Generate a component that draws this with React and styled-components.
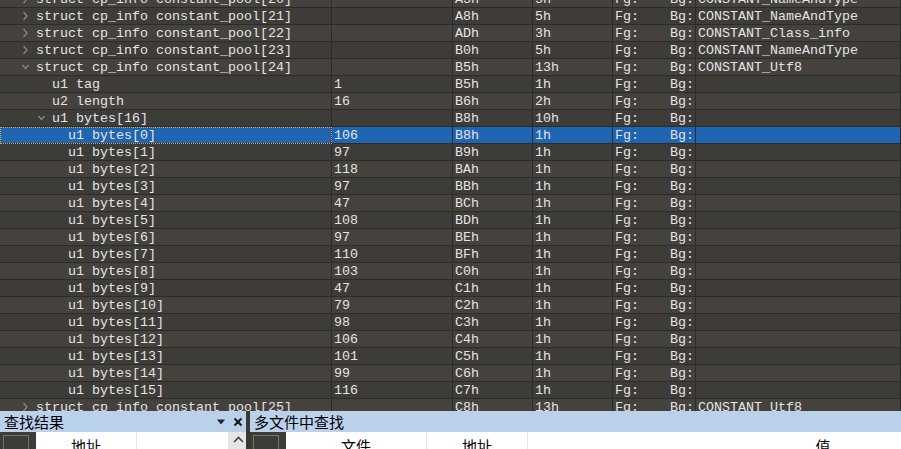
import React from 'react'
import styled, { createGlobalStyle } from 'styled-components'

/***************************************
  DATA
***************************************/

const pool = (n, start, size, comment, open) => ({
  level: 1, name: `struct cp_info constant_pool[${n}]`, value: '', start, size, comment,
  toggle: open ? 'open' : 'closed',
})

const byteValues = [106, 97, 118, 97, 47, 108, 97, 110, 103, 47, 79, 98, 106, 101, 99, 116]

const rows = [
  pool(20, 'A3h', '5h', 'CONSTANT_NameAndType'),
  pool(21, 'A8h', '5h', 'CONSTANT_NameAndType'),
  pool(22, 'ADh', '3h', 'CONSTANT_Class_info'),
  pool(23, 'B0h', '5h', 'CONSTANT_NameAndType'),
  pool(24, 'B5h', '13h', 'CONSTANT_Utf8', true),
  { level: 2, name: 'u1 tag', value: '1', start: 'B5h', size: '1h' },
  { level: 2, name: 'u2 length', value: '16', start: 'B6h', size: '2h' },
  { level: 2, name: 'u1 bytes[16]', value: '', start: 'B8h', size: '10h', toggle: 'open' },
  ...byteValues.map((v, i) => ({
    level: 3,
    name: `u1 bytes[${i}]`,
    value: String(v),
    start: (0xb8 + i).toString(16).toUpperCase() + 'h',
    size: '1h',
    selected: i === 0,
  })),
  pool(25, 'C8h', '13h', 'CONSTANT_Utf8'),
]

/***************************************
  COMPONENTS
***************************************/

const GlobalStyle = createGlobalStyle`
  html, body {
    margin: 0;
    padding: 0;
    background: #3e3c38;
  }
`

const Root = styled.div`
  width: 901px;
  height: 449px;
  display: flex;
  flex-direction: column;
  overflow: hidden;
  background: #3e3c38;
`

const Tree = styled.div`
  height: 411px;
  flex: none;
  overflow: hidden;
`

const TreeBody = styled.div`
  margin-top: -9px;
`

const Row = styled.div`
  display: grid;
  grid-template-columns: 332px 121px 80px 80px 83px 1fr;
  height: 17px;
  background: ${(p) => (p.$selected ? '#1f65b2' : p.$odd ? '#3e3c38' : '#45423e')};
  font-family: "Liberation Mono", "DejaVu Sans Mono", monospace;
  font-size: 13.33px;
  line-height: 17px;
  color: #e4e4e4;
`

const Cell = styled.div`
  border-right: 1px solid #2e2c29;
  border-bottom: 1px solid #2e2c29;
  padding-left: 2px;
  white-space: nowrap;
  overflow: hidden;
`

const NameCell = styled(Cell)`
  display: flex;
  align-items: center;
  padding-left: ${(p) => 20 + 16 * (p.$level - 1)}px;
  ${(p) => p.$focus && `
    outline: 1px dotted #e8a040;
    outline-offset: -1px;
  `}
`

const Toggle = styled.span`
  width: 16px;
  height: 16px;
  flex: none;
  display: flex;
  align-items: center;
  padding-left: 2px;
  box-sizing: border-box;
`

const ColorCell = styled(Cell)`
  display: flex;
  justify-content: space-between;
  padding-right: 1px;
`

const Bottom = styled.div`
  flex: 1;
  display: flex;
  background: #3e3c38;
  font-family: "Noto Sans CJK SC", sans-serif;
`

const Panel = styled.div`
  width: ${(p) => (p.$width ? `${p.$width}px` : 'auto')};
  flex: ${(p) => (p.$width ? 'none' : '1')};
  display: flex;
  flex-direction: column;
  overflow: hidden;
`

const Splitter = styled.div`
  width: 4px;
  flex: none;
  background: #3a3834;
`

const PanelHeader = styled.div`
  height: 21px;
  flex: none;
  background: #bad1eb;
  display: flex;
  align-items: center;
  padding-left: 4px;
  color: #000;
  font-size: 15px;
  line-height: 21px;
`

const Title = styled.span`
  flex: 1;
`

const HeaderTool = styled.span`
  width: 17px;
  display: flex;
  justify-content: center;
  align-items: center;
`

const HeaderRow = styled.div`
  display: flex;
  height: 17px;
  overflow: hidden;
`

const Corner = styled.div`
  width: 36px;
  flex: none;
  background: #3e3c38;
  padding: 3px 0 0 3px;
  box-sizing: border-box;
`

const CornerBox = styled.div`
  width: 26px;
  height: 20px;
  border: 1px solid #77746f;
  box-sizing: border-box;
`

const ColHead = styled.div`
  width: ${(p) => p.$width}px;
  flex: none;
  background: #fff;
  border-right: 1px solid #e4e4e4;
  color: #000;
  font-size: 15px;
  line-height: 17px;
  padding-top: 5px;
  text-align: center;
`

const ScrollUp = styled.div`
  width: 19px;
  flex: none;
  background: #e6e6e6;
  display: flex;
  justify-content: center;
  padding-top: 4px;
`

/***************************************
  ICONS
***************************************/

const Chevron = ({ open }) => (
  <svg width="8" height="10" viewBox="0 0 8 10">
    {open
      ? <path d="M0.5 3 L3.5 6.5 L6.5 3" fill="none" stroke="#8a8884" strokeWidth="1.3" />
      : <path d="M1.5 1 L5 5 L1.5 9" fill="none" stroke="#8a8884" strokeWidth="1.3" />}
  </svg>
)

const Caret = () => (
  <svg width="10" height="6" viewBox="0 0 10 6">
    <path d="M1 0.5 H9 L5 5.5 Z" fill="#222" />
  </svg>
)

const Cross = () => (
  <svg width="10" height="10" viewBox="0 0 10 10">
    <path d="M1.5 1.5 L8.5 8.5 M8.5 1.5 L1.5 8.5" stroke="#111" strokeWidth="2" />
  </svg>
)

const UpArrow = () => (
  <svg width="11" height="7" viewBox="0 0 11 7">
    <path d="M1 6 L5.5 1.5 L10 6" fill="none" stroke="#444" strokeWidth="1.6" />
  </svg>
)

/***************************************
  MAIN
***************************************/

const TreeRow = ({ row, index }) => (
  <Row $odd={index % 2 === 1} $selected={row.selected}>
    <NameCell $level={row.level} $focus={row.selected}>
      <Toggle>{row.toggle && <Chevron open={row.toggle === 'open'} />}</Toggle>
      {row.name}
    </NameCell>
    <Cell>{row.value}</Cell>
    <Cell>{row.start}</Cell>
    <Cell>{row.size}</Cell>
    <ColorCell>
      <span>Fg:</span>
      <span>Bg:</span>
    </ColorCell>
    <Cell>{row.comment || ''}</Cell>
  </Row>
)

const App = () => (
  <Root>
    <GlobalStyle />
    <Tree>
      <TreeBody>
        {rows.map((row, i) => <TreeRow key={i} row={row} index={i} />)}
      </TreeBody>
    </Tree>
    <Bottom>
      <Panel $width={246}>
        <PanelHeader>
          <Title>查找结果</Title>
          <HeaderTool><Caret /></HeaderTool>
          <HeaderTool><Cross /></HeaderTool>
        </PanelHeader>
        <HeaderRow>
          <Corner><CornerBox /></Corner>
          <ColHead $width={100}>地址</ColHead>
          <ColHead $width={91} />
          <ScrollUp><UpArrow /></ScrollUp>
        </HeaderRow>
      </Panel>
      <Splitter />
      <Panel>
        <PanelHeader>
          <Title>多文件中查找</Title>
        </PanelHeader>
        <HeaderRow>
          <Corner><CornerBox /></Corner>
          <ColHead $width={140}>文件</ColHead>
          <ColHead $width={100}>地址</ColHead>
          <ColHead $width={590}>值</ColHead>
        </HeaderRow>
      </Panel>
    </Bottom>
  </Root>
)

/**************************************/

export default App
